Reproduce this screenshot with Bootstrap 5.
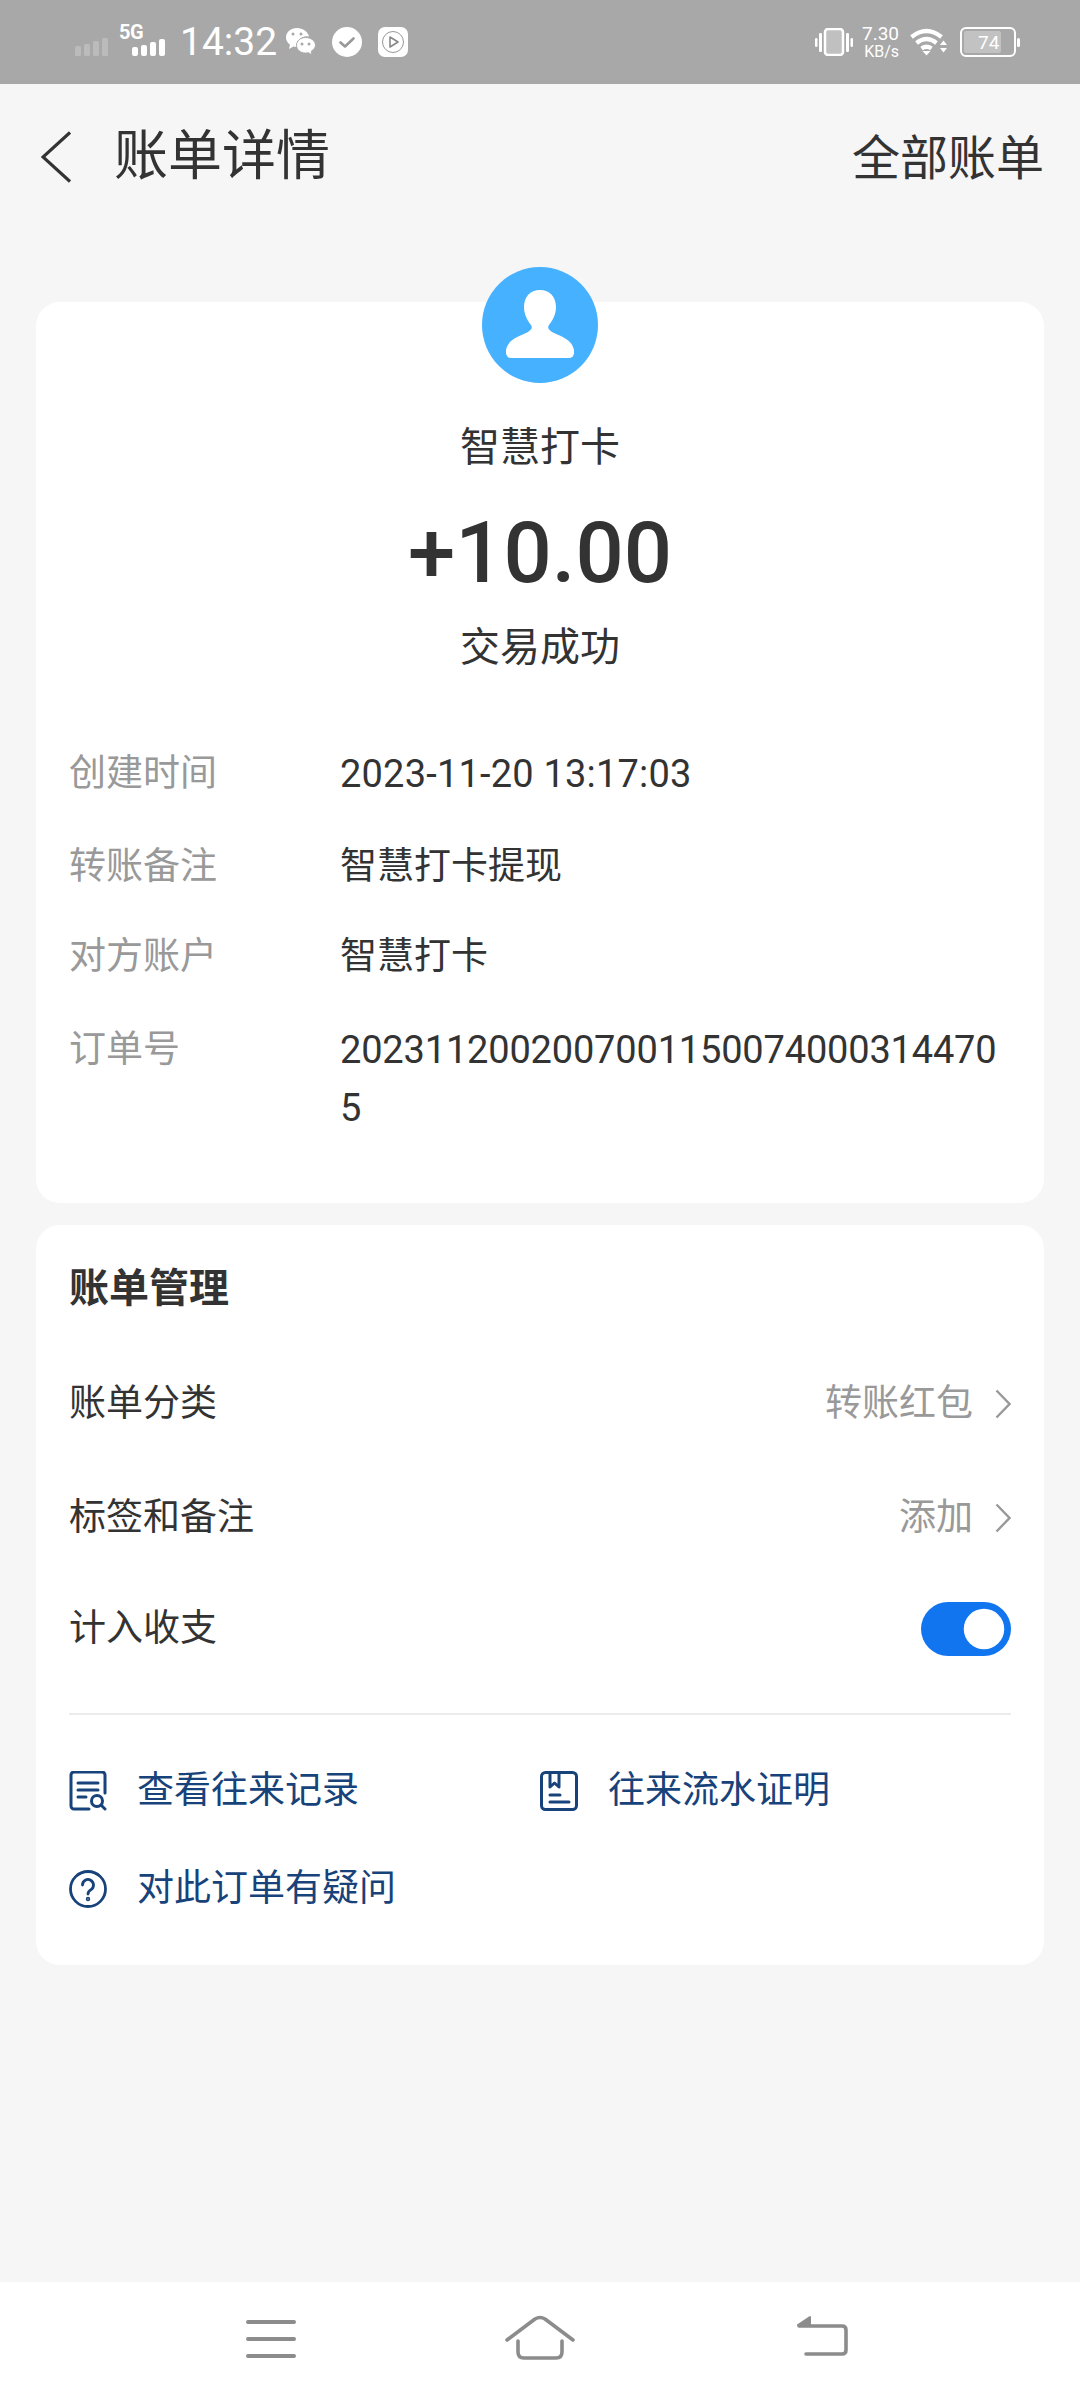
<!DOCTYPE html>
<html lang="zh-CN">
<head>
<meta charset="utf-8">
<title>账单详情</title>
<link href="https://cdn.jsdelivr.net/npm/bootstrap@5.3.0/dist/css/bootstrap.min.css" rel="stylesheet">
<style>
html,body{width:1080px;height:2408px;overflow:hidden}
body{background:#f6f6f7;color:#333;font-family:Roboto,"Noto Sans CJK SC",sans-serif;font-size:37px;line-height:58px}
.shell{height:2408px}
.statusbar{height:84px;background:#a8a8a8;color:#fff;padding-left:75px;padding-right:60px}
.st-dim{margin-bottom:28px}
.st-five{width:48px;margin-bottom:4px}
.st-fiveg{font-size:20px;font-weight:700;line-height:16px;height:15px;display:block;letter-spacing:-.5px}
.st-time{font-size:39px;line-height:44px;margin-left:13px;margin-right:7px}
.st-speed{width:42px;font-size:16px;line-height:17px;margin-left:4px;margin-right:11px;text-align:right}
.st-speed-top{font-size:19px;line-height:18px}
.st-batt{margin-left:12px}
.topbar{height:218px;padding:0 36px 0 41px;}
.top-title{font-size:54px;line-height:70px;margin-left:43px;color:#333}
.top-link{font-size:48px;line-height:70px;margin-top:4px;color:#333}
.topbar-inner{height:146px}
.sheet{background:#fff;border-radius:24px;margin:0 36px;padding-left:33px;padding-right:33px}
.sheet-a{height:901px;margin-bottom:22px}
.sheet-b{height:740px}
.avatar{width:116px;height:116px;border-radius:50%;background:#46b1fe;margin-top:-35px}
.payee{font-size:40px;line-height:56px;margin-top:37px}
.amount{font-size:85px;font-weight:500;line-height:110px;margin-top:22px;color:#333}
.state{font-size:40px;line-height:56px;margin-top:12px}
.info-list{margin-top:69px}
.info-row{min-height:93px;margin:0}
.info-row-tight{min-height:90px}
.info-key{width:271px;color:#999;flex:none}
.info-val{flex:1;word-break:break-all;min-width:0;color:#333}
.info-num{font-size:38px}
.info-date{letter-spacing:.2px}
.info-order{letter-spacing:-.18px}
.sheet-head{font-size:40px;font-weight:700;line-height:58px;padding-top:35px;height:122px;color:#333}
.mg-row{height:114px}
.mg-row-last{height:108px}
.mg-note{color:#999}
.chev{margin-left:22px}
.switch-wrap{margin:0;padding:0;min-height:0}
.form-switch .switch-big{width:90px;height:54px;margin:0;float:none;background-color:#1175f0;border:0;border-radius:27px;box-shadow:none}
.rule{height:2px;background:#ececec;margin-top:30px;margin-bottom:47px}
.act{color:#17427a;text-decoration:none;line-height:58px}
.act-row{height:98px}
.act-cell{width:471px}
.act-ico{margin-right:30px;flex:none}
.spacer-fill{flex:1}
.navbar-bottom{height:126px;background:#fff}
.nav-abs{padding-left:246px;padding-top:38px}
.nav-home{margin:-5px 0 0 209px}
.nav-back{margin:-5px 0 0 221px}
</style>
<script src="https://cdn.jsdelivr.net/npm/bootstrap@5.3.0/dist/js/bootstrap.bundle.min.js"></script>
</head>
<body>
<div class="shell d-flex flex-column">

  <div class="statusbar d-flex align-items-center flex-shrink-0">
    <svg width="36" height="18" viewBox="0 0 36 18" fill="#fff" opacity=".22" class="align-self-end st-dim"><rect x="0" y="8" width="6" height="10" rx="1.5"/><rect x="9" y="6" width="6" height="12" rx="1.5"/><rect x="18" y="3" width="6" height="15" rx="1.5"/><rect x="27" y="0" width="6" height="18" rx="1.5"/></svg>
    <div class="st-five ms-2 d-flex flex-column">
      <span class="st-fiveg">5G</span>
      <svg class="d-block" width="48" height="17" viewBox="0 0 48 17" fill="#fff"><rect x="13" y="8" width="6" height="9" rx="2"/><rect x="22" y="6" width="6" height="11" rx="2"/><rect x="31" y="3" width="6" height="14" rx="2"/><rect x="40" y="0" width="6" height="17" rx="2"/></svg>
    </div>
    <span class="st-time">14:32</span>
    <svg width="32" height="32" viewBox="0 0 32 32" fill="#fff"><path d="M13 2C6.500 2 2 6.300 2 11.500c0 3 1.600 5.500 4 7.300L5 23l4.500-2.500c1 .3 1.900.4 3 .4l1-.1A9 9 0 0 1 25 10.600C24 5.600 19 2 13 2z"/><path d="M21.500 11.500c-5 0-9 3.400-9 7.800s4 7.800 9 7.800c1 0 1.900-.1 2.800-.4L28 29l-.8-3.700c2.600-1.500 4.300-3.700 4.300-6 0-4.400-4.500-7.800-10-7.800z" stroke="#a8a8a8" stroke-width="1"/><circle cx="9" cy="8" r="1.500" fill="#a8a8a8"/><circle cx="17" cy="8" r="1.500" fill="#a8a8a8"/><circle cx="18" cy="18" r="1.500" fill="#a8a8a8"/><circle cx="25" cy="18" r="1.500" fill="#a8a8a8"/></svg>
    <svg class="ms-3" width="30" height="30" viewBox="0 0 30 30"><circle cx="15" cy="15" r="15" fill="#fff"/><path d="M8.500 15.500l4.500 4 8.500-8" fill="none" stroke="#999" stroke-width="2.600" stroke-linecap="round" stroke-linejoin="round"/></svg>
    <svg class="ms-3" width="30" height="30" viewBox="0 0 30 30"><rect width="30" height="30" rx="7" fill="#fff"/><circle cx="15" cy="15" r="10.500" fill="none" stroke="#999" stroke-width="1"/><path d="M12 10l8 5-8 5z" fill="none" stroke="#888" stroke-width="1.600" stroke-linejoin="round"/></svg>
    <div class="ms-auto d-flex align-items-center">
      <svg width="38" height="28" viewBox="0 0 38 28" fill="#fff"><rect x="0" y="10" width="2.500" height="9" rx="1.200"/><rect x="35.500" y="10" width="2.500" height="9" rx="1.200"/><rect x="4" y="5" width="3" height="19" rx="1.200"/><rect x="31" y="5" width="3" height="19" rx="1.200"/><rect x="10" y="1" width="18" height="26" rx="3" fill="#c0c0c0" stroke="#fff" stroke-width="2.500"/></svg>
      <div class="st-speed"><div class="st-speed-top">7.30</div><div>KB/s</div></div>
      <svg width="38" height="28" viewBox="0 0 38 28"><path d="M1.500 9Q16.500-3 31.500 9M6.500 15Q16.500 7 26.500 15M11.500 20.500Q16.500 17 21.500 20.500" fill="none" stroke="#fff" stroke-width="4.200"/><path d="M12.500 23h8L16.500 27.500zM30 17l3.500-4.500L37 17zM30 20h7l-3.500 4.500z" fill="#fff"/></svg>
      <div class="st-batt d-flex align-items-center">
        <svg width="60" height="30" viewBox="0 0 60 30"><rect x="1" y="1" width="54" height="28" rx="5" fill="none" stroke="#fff" stroke-width="2"/><rect x="4" y="4" width="37" height="22" rx="2" fill="#c2c2c2"/><rect x="57" y="11" width="3" height="9" rx="1.500" fill="#fff"/><text x="18" y="21.500" font-family="Roboto,sans-serif" font-size="19" fill="#fff">74</text></svg>
      </div>
    </div>
  </div>

  <div class="topbar flex-shrink-0">
    <div class="topbar-inner d-flex align-items-center">
      <svg width="30" height="52" viewBox="0 0 30 52"><path d="M29 1.500L2 26l27 24.500" fill="none" stroke="#333" stroke-width="3.200"/></svg>
      <span class="top-title">账单详情</span>
      <span class="top-link ms-auto">全部账单</span>
    </div>
  </div>

  <section class="sheet sheet-a flex-shrink-0">
    <div class="d-flex flex-column align-items-center text-center">
      <div class="avatar d-flex align-items-center justify-content-center">
        <svg width="68" height="70" viewBox="0 0 68 70"><path d="M34 0c-10 0-16 7-16 17 0 8 4 14 7 18 2 3 0 5-3 7C14 46 2 49 0 60c-.6 4 1 8 5 8h58c4 0 5.600-4 5-8-2-11-14-14-22-18-3-2-5-4-3-7 3-4 7-10 7-18C50 7 44 0 34 0z" fill="#fff"/></svg>
      </div>
      <div class="payee">智慧打卡</div>
      <div class="amount">+10.00</div>
      <div class="state">交易成功</div>
    </div>
    <div class="info-list">
      <div class="info-row d-flex"><div class="info-key">创建时间</div><div class="info-val info-num info-date">2023-11-20 13:17:03</div></div>
      <div class="info-row info-row-tight d-flex"><div class="info-key">转账备注</div><div class="info-val">智慧打卡提现</div></div>
      <div class="info-row d-flex"><div class="info-key">对方账户</div><div class="info-val">智慧打卡</div></div>
      <div class="info-row d-flex"><div class="info-key">订单号</div><div class="info-val info-num info-order">20231120020070011500740003144705</div></div>
    </div>
  </section>

  <section class="sheet sheet-b flex-shrink-0">
    <div class="sheet-head">账单管理</div>
    <div class="mg-row d-flex align-items-center"><span>账单分类</span><span class="mg-note ms-auto">转账红包</span>
      <svg class="chev" width="16" height="30" viewBox="0 0 16 30"><path d="M1.500 1.500L14.500 15 1.500 28.500" fill="none" stroke="#999" stroke-width="2.400"/></svg></div>
    <div class="mg-row d-flex align-items-center"><span>标签和备注</span><span class="mg-note ms-auto">添加</span>
      <svg class="chev" width="16" height="30" viewBox="0 0 16 30"><path d="M1.500 1.500L14.500 15 1.500 28.500" fill="none" stroke="#999" stroke-width="2.400"/></svg></div>
    <div class="mg-row-last d-flex align-items-center"><span>计入收支</span>
      <div class="form-check form-switch switch-wrap ms-auto d-flex"><input class="form-check-input switch-big" type="checkbox" role="switch" checked aria-label="计入收支"></div></div>
    <div class="rule"></div>
    <div class="act-row d-flex">
      <a class="act act-cell d-flex align-items-center align-self-start" href="#">
        <svg class="act-ico" width="38" height="40" viewBox="0 0 38 40" fill="none" stroke="#17427a" stroke-width="3" stroke-linecap="round"><path d="M36 22V4a3 3 0 0 0-3-3H5A3 3 0 0 0 2 4v31a3 3 0 0 0 3 3h15"/><path d="M9 12h20M9 19h20M9 26h8"/><circle cx="28" cy="30" r="5.500"/><path d="M32 34l4 4"/></svg>
        <span>查看往来记录</span></a>
      <a class="act d-flex align-items-center align-self-start" href="#">
        <svg class="act-ico" width="38" height="40" viewBox="0 0 38 40" fill="none" stroke="#17427a" stroke-width="3" stroke-linecap="round" stroke-linejoin="round"><rect x="1.500" y="1.500" width="35" height="37" rx="4"/><path d="M10 2v14l4.500-4 4.500 4V2M10 24h10M10 31h19"/></svg>
        <span>往来流水证明</span></a>
    </div>
    <a class="act d-flex align-items-center" href="#">
      <svg class="act-ico" width="38" height="38" viewBox="0 0 38 38" fill="none" stroke="#17427a" stroke-width="2.800" stroke-linecap="round"><circle cx="19" cy="19" r="17.500"/><path d="M13.500 15a5.500 5.500 0 1 1 8.500 4.600c-2 1.300-3 2.400-3 4.400"/><circle cx="19" cy="29" r=".8"/></svg>
      <span>对此订单有疑问</span></a>
  </section>

  <div class="spacer-fill"></div>

  <nav class="navbar-bottom flex-shrink-0 d-flex align-items-start nav-abs">
    <svg width="50" height="38" viewBox="0 0 50 38" fill="none" stroke="#8c8c8c" stroke-width="4" stroke-linecap="round"><path d="M2 2h46M2 19h46M2 36h46"/></svg>
    <svg class="nav-home" width="70" height="45" viewBox="0 0 70 45" fill="none" stroke="#8c8c8c" stroke-width="3.600" stroke-linecap="round" stroke-linejoin="round"><path d="M2 25L30 4q5-3 10 0l28 21"/><path d="M13 26v11q0 6 6 6h32q6 0 6-6V26"/></svg>
    <svg class="nav-back" width="52" height="42" viewBox="0 0 52 42" fill="none" stroke="#8c8c8c" stroke-width="3.600" stroke-linecap="round"><path d="M3 11h43q4 0 4 4v20q0 4-4 4H10"/><path d="M2 10L14 2v8z" fill="#8c8c8c" stroke-width="2" stroke-linejoin="round"/></svg>
  </nav>
</div>
</body>
</html>
